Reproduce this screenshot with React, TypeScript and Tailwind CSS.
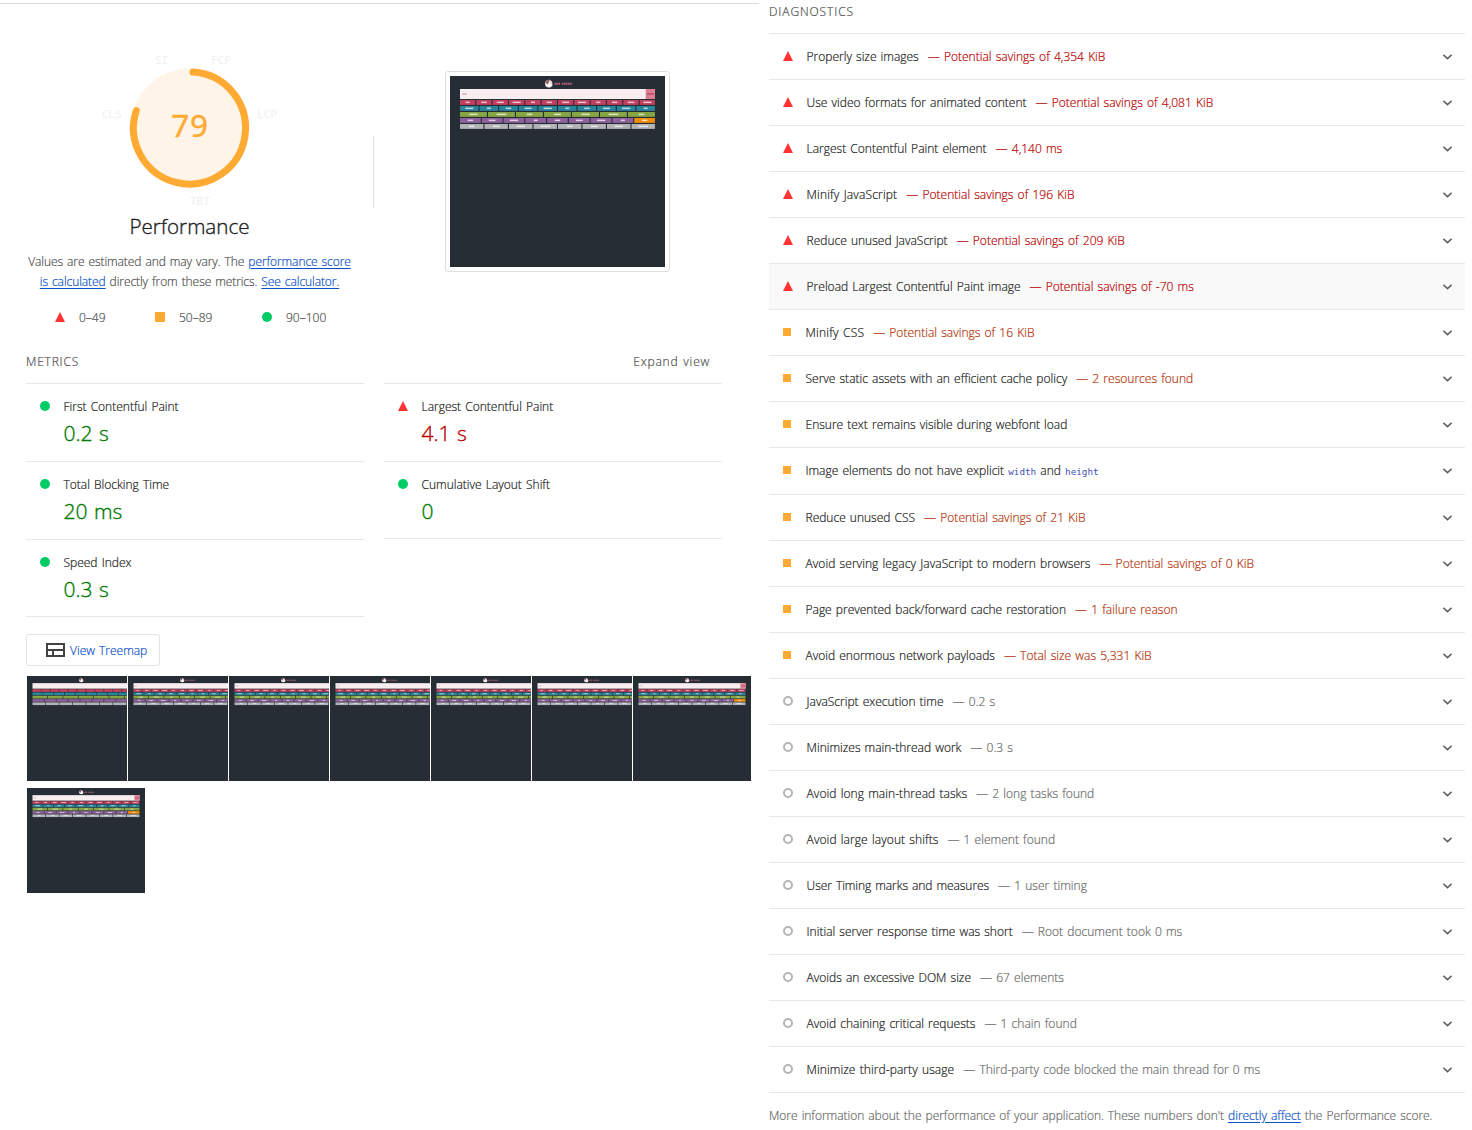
import React from "react";

type Kind = "fail" | "average" | "pass" | "info";

function Mark({ kind, size = 10 }: { kind: Kind; size?: number }) {
  return (
    <svg width={size} height={size} viewBox="0 0 10 10" className="shrink-0">
      {kind === "fail" && <path d="M5 0 10 10H0Z" fill="#f33" />}
      {kind === "average" && <rect width="10" height="10" fill="#fa3" />}
      {kind === "pass" && <circle cx="5" cy="5" r="5" fill="#0c6" />}
      {kind === "info" && <circle cx="5" cy="5" r="4" fill="none" stroke="#b5b5b5" strokeWidth="2" />}
    </svg>
  );
}

const bands = [
  { n: 12, color: "#c2405f", y: 24 },
  { n: 10, color: "#27859c", y: 30 },
  { n: 7, color: "#88a544", y: 36 },
  { n: 9, color: "#8d629c", y: 42 },
  { n: 8, color: "#b2b3b6", y: 48 },
];

function Shot({ width, height, labels = true, complete = true }: { width: number; height: number; labels?: boolean; complete?: boolean }) {
  return (
    <svg width={width} height={height} viewBox="0 0 215 191" preserveAspectRatio="none" className="block shrink-0">
      <rect width="215" height="191" fill="#262d35" />
      <circle cx="98.7" cy="7.8" r="3.7" fill="#f1d9dc" />
      <path d="M96 10l3-7 1 5 3 1-3 2.5z" fill="#fff" />
      <path d="M95.6 6.5q2-3.5 4-2l-2 4z" fill="#8d5560" />
      {labels && <path d="M104.5 7.8h5.5m1.7 0h10.5" stroke="#b5637a" strokeWidth="1.9" strokeDasharray="1.6 .4" />}
      <rect x="10" y="13" width="195" height="10" fill="#f8eeef" />
      {labels && <path d="M12 18h5" stroke="#c9a5ac" strokeWidth="1.2" />}
      {complete && <rect x="195.7" y="13" width="9.3" height="10" fill="#dc7d92" />}
      {complete && <path d="M197 18h7" stroke="#a84762" strokeWidth="1.2" />}
      {bands.map((b, r) =>
        Array.from({ length: b.n }, (_, i) => {
          const w = 196 / b.n;
          const x = 10 + i * w;
          const lw = 4 + ((i * 5 + r * 3) % 4) * 1.4 + (b.n < 9 ? 1.5 : 0);
          return (
            <g key={r + "-" + i}>
              <rect x={x} y={b.y} width={w - 1.1} height="4.9" fill={complete && r === 3 && i === 8 ? "#f08c0c" : b.color} />
              {labels && <rect x={x + w / 2 - lw / 2 - 0.5} y={b.y + 1.6} width={lw} height="1.5" fill="#fff" opacity=".7" />}
            </g>
          );
        })
      )}
    </svg>
  );
}

function Gauge() {
  return (
    <svg width="180" height="160" viewBox="0 0 180 160" className="block [-webkit-text-stroke:0]">
      <circle cx="90" cy="78" r="59.5" fill="#fff4e8" />
      <path d="M93 22.1A56 56 0 1 1 36.3 60.5" fill="none" stroke="#fa3" strokeWidth="7" strokeLinecap="round" />
      <text x="90" y="87" textAnchor="middle" fontSize="31.5" letterSpacing="0.7" fill="#fa3" stroke="#fa3" strokeWidth=".4" className="font-['Noto_Sans'] font-normal">79</text>
      <g fontSize="11" fill="#f0f0f0" className="font-['DejaVu_Sans_Mono']">
        <text x="55" y="14">SI</text>
        <text x="111" y="14">FCP</text>
        <text x="2" y="68">CLS</text>
        <text x="157" y="68">LCP</text>
        <text x="90" y="155">TBT</text>
      </g>
    </svg>
  );
}

function Metric({ kind, name, value, last }: { kind: Kind; name: string; value: string; last?: boolean }) {
  return (
    <div className={"flex border-t border-[#e8e8e8] pl-3.5 pt-[13px] " + (last ? "h-[78px] border-b" : "h-[78px]")}>
      <div className="pt-1"><Mark kind={kind} /></div>
      <div className="pl-[13.5px]">
        <div className="h-5 leading-5 text-[#212121]">{name}</div>
        <div className={"text-[21px] leading-8 [-webkit-text-stroke:0.35px] [word-spacing:1px] " + (kind === "fail" ? "text-[#b80000]" : "text-[#017a01]")}>{value}</div>
      </div>
    </div>
  );
}

type Audit = { kind: Kind; title: React.ReactNode; note?: string; hover?: boolean; tall?: boolean };
const code = "font-['DejaVu_Sans_Mono'] text-[9.3px] font-normal text-[#3f51b5] [-webkit-text-stroke:0]";
const audits: Audit[] = [
  { kind: "fail", title: "Properly size images", note: "Potential savings of 4,354 KiB" },
  { kind: "fail", title: "Use video formats for animated content", note: "Potential savings of 4,081 KiB" },
  { kind: "fail", title: "Largest Contentful Paint element", note: "4,140 ms" },
  { kind: "fail", title: <span className="tracking-[0.15px]">Minify JavaScript</span>, note: "Potential savings of 196 KiB" },
  { kind: "fail", title: "Reduce unused JavaScript", note: "Potential savings of 209 KiB" },
  { kind: "fail", title: "Preload Largest Contentful Paint image", note: "Potential savings of -70 ms", hover: true },
  { kind: "average", title: <span className="tracking-[0.2px]">Minify CSS</span>, note: "Potential savings of 16 KiB" },
  { kind: "average", title: "Serve static assets with an efficient cache policy", note: "2 resources found" },
  { kind: "average", title: "Ensure text remains visible during webfont load" },
  { kind: "average", title: <>Image elements do not have explicit <code className={code}>width</code> and <code className={code}>height</code></>, tall: true },
  { kind: "average", title: "Reduce unused CSS", note: "Potential savings of 21 KiB" },
  { kind: "average", title: <span className="tracking-[0.06px]">Avoid serving legacy JavaScript to modern browsers</span>, note: "Potential savings of 0 KiB" },
  { kind: "average", title: "Page prevented back/forward cache restoration", note: "1 failure reason" },
  { kind: "average", title: "Avoid enormous network payloads", note: "Total size was 5,331 KiB" },
  { kind: "info", title: "JavaScript execution time", note: "0.2 s" },
  { kind: "info", title: "Minimizes main-thread work", note: "0.3 s" },
  { kind: "info", title: <span className="tracking-[0.06px]">Avoid long main-thread tasks</span>, note: "2 long tasks found" },
  { kind: "info", title: <span className="tracking-[0.08px]">Avoid large layout shifts</span>, note: "1 element found" },
  { kind: "info", title: <span className="tracking-[-0.06px]">User Timing marks and measures</span>, note: "1 user timing" },
  { kind: "info", title: "Initial server response time was short", note: "Root document took 0 ms" },
  { kind: "info", title: "Avoids an excessive DOM size", note: "67 elements" },
  { kind: "info", title: "Avoid chaining critical requests", note: "1 chain found" },
  { kind: "info", title: <span className="tracking-[0.08px]">Minimize third-party usage</span>, note: "Third-party code blocked the main thread for 0 ms" },
];

const noteColor: Record<Kind, string> = {
  fail: "text-[#b80000]",
  average: "text-[#b33208]",
  pass: "text-[#018001]",
  info: "text-[#6a6a6a]",
};

function AuditRow({ kind, title, note, hover, tall }: Audit) {
  return (
    <div className={"flex items-center border-t border-[#e8e8e8] pl-3.5 pr-[13.5px] " + (tall ? "h-[47px] " : "h-[46px] ") + (hover ? "bg-[#f9f9f9]" : "")}>
      <div className="mb-0.5 shrink-0"><Mark kind={kind} size={kind === "average" ? 8 : 10} /></div>
      <div className={"flex-1 whitespace-nowrap text-[#212121] " + (kind === "average" ? "pl-[14.5px]" : "pl-[13.6px]")}>
        {title}
        {note && <span className={"ml-[9px] tracking-[0.02px] " + noteColor[kind]}>— {note}</span>}
      </div>
      <svg width="9" height="6" viewBox="0 0 9 6" className="shrink-0"><path d="M.4.8 4.5 4.6 8.6.8" fill="none" stroke="#616161" strokeWidth="1.6" /></svg>
    </div>
  );
}

const link = "text-[#0c50c7] underline underline-offset-2";

export default function App() {
  return (
    <div className="flex h-[1130px] w-[1472px] overflow-hidden bg-white font-['Open_Sans',sans-serif] text-[12px] font-light text-[#505050] [-webkit-text-stroke:0.2px] [word-spacing:1px]">
      <div className="mt-[3px] w-[759px] shrink-0 border-t border-[#dcdcdc] pl-[26px]">
        <div className="flex h-[340px]">
          <div className="flex w-[327px] flex-col items-center pt-[46px]">
            <Gauge />
            <div className="mt-0.5 h-7 text-[20.6px] leading-7 text-[#212121] [-webkit-text-stroke:0.35px]">Performance</div>
            <p className="mt-3 whitespace-nowrap text-center leading-5 tracking-[-0.08px]">
              Values are estimated and may vary. The <a className={link}>performance score</a><br />
              <a className={link}>is calculated</a> directly from these metrics. <a className={link}>See calculator.</a>
            </p>
            <div className="mt-4 flex h-5 items-center self-stretch pl-[29px] leading-5">
              <div className="flex w-[100px] items-center gap-3.5"><span className="mb-0.5"><Mark kind="fail" /></span>0–49</div>
              <div className="flex w-[107px] items-center gap-3.5"><span className="mb-0.5"><Mark kind="average" /></span>50–89</div>
              <div className="flex items-center gap-3.5"><span className="mb-0.5"><Mark kind="pass" /></span>90–100</div>
            </div>
          </div>
          <div className="ml-5 mt-[132px] h-[72px] w-px bg-[#e0e0e0]" />
          <div className="ml-[71px] mt-[67px] h-[201px] w-[225px] rounded-[3px] border border-[#dfdfdf] p-1">
            <Shot width={215} height={191} />
          </div>
        </div>
        <div className="flex h-[39px] w-[696px] justify-between pr-3 pt-2 leading-5 tracking-[0.8px]">
          <span className="tracking-[0.8px]">METRICS</span>
          <span>Expand view</span>
        </div>
        <div className="flex gap-5">
          <div className="w-[338px]">
            <Metric kind="pass" name="First Contentful Paint" value="0.2 s" />
            <Metric kind="pass" name="Total Blocking Time" value="20 ms" />
            <Metric kind="pass" name="Speed Index" value="0.3 s" last />
          </div>
          <div className="w-[338px]">
            <Metric kind="fail" name="Largest Contentful Paint" value="4.1 s" />
            <Metric kind="pass" name="Cumulative Layout Shift" value="0" last />
          </div>
        </div>
        <div className="mt-[17px] flex h-8 w-[134px] items-center gap-[5px] rounded-[3px] border border-[#e3e3e3] pl-[19px] text-[#0c50c7]">
          <svg width="19" height="14" viewBox="0 0 19 14" fill="none" stroke="#424242" strokeWidth="2"><path d="M1 1h17v12H1zM1 7h17M7 7v6" /></svg>
          <span className="whitespace-nowrap pt-px">View Treemap</span>
        </div>
        <div className="mt-2.5 flex flex-wrap gap-x-px gap-y-[7px] pl-px">
          {[0, 1, 2, 3, 4, 5, 6, 7].map((i) => (
            <div key={i} className={"h-[105px] overflow-hidden " + (i < 6 ? "w-[100px]" : "w-[118px]")}>
              <Shot width={118} height={105} labels={i > 0} complete={i > 5} />
            </div>
          ))}
        </div>
      </div>
      <div className="ml-[10px] w-[696px] shrink-0">
        <div className="h-[33px] pt-0.5 leading-5 tracking-[0.9px]">DIAGNOSTICS</div>
        <div className="border-b border-[#e8e8e8]">
          {audits.map((a, i) => <AuditRow key={i} {...a} />)}
        </div>
        <p className="mt-[13px] whitespace-nowrap leading-5 tracking-[-0.03px] text-[#6a6a6a]">
          More information about the performance of your application. These numbers don't <a className={link}>directly affect</a> the Performance score.
        </p>
      </div>
    </div>
  );
}
